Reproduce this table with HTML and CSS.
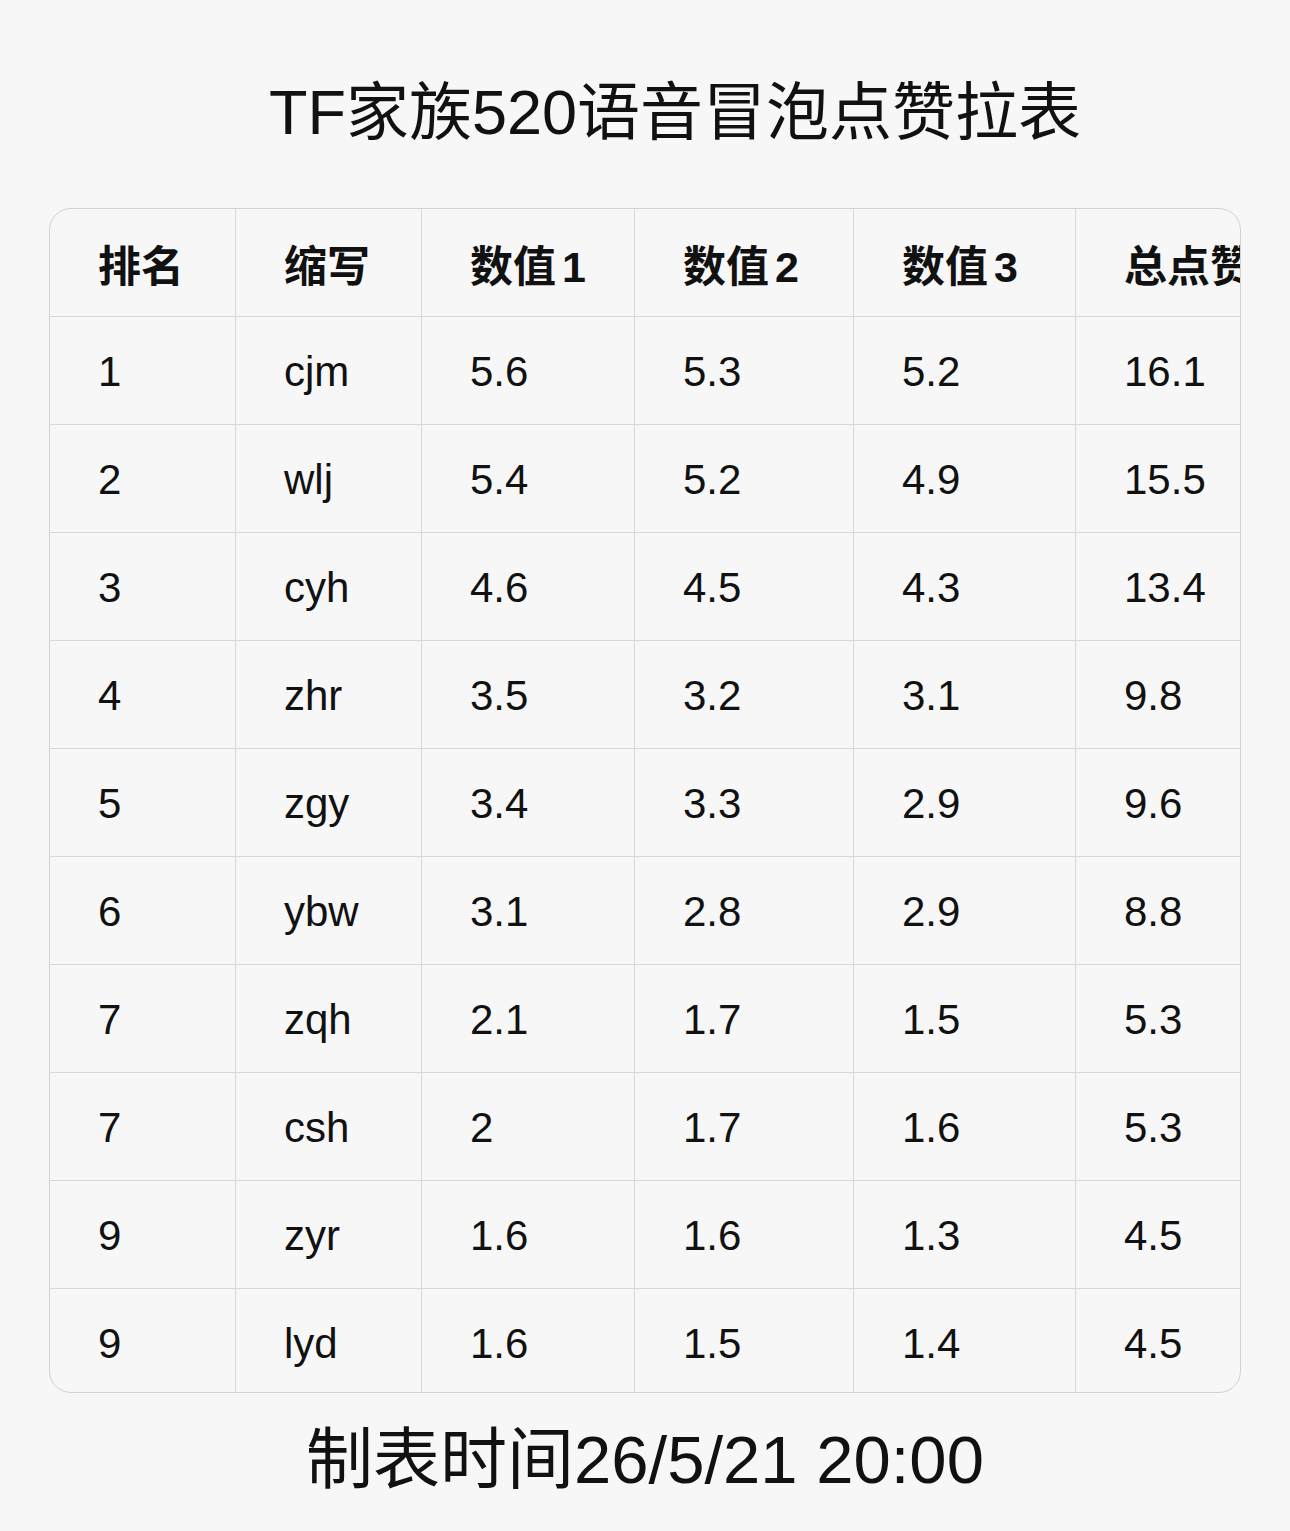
FILE: index.html
```html
<!DOCTYPE html>
<html lang="zh">
<head>
<meta charset="utf-8">
<title>TF家族520语音冒泡点赞拉表</title>
<link rel="stylesheet" href="styles.css">
</head>
<body>
<div class="page">
  <h1 class="title">TF家族520语音冒泡点赞拉表</h1>
  <div class="table-wrap">
    <table class="rank">
      <colgroup>
        <col class="c1"><col class="c2"><col class="c3"><col class="c4"><col class="c5"><col class="c6">
      </colgroup>
      <thead>
        <tr><th>排名</th><th>缩写</th><th>数值<span class="num">1</span></th><th>数值<span class="num">2</span></th><th>数值<span class="num">3</span></th><th>总点赞</th></tr>
      </thead>
      <tbody>
        <tr><td>1</td><td>cjm</td><td>5.6</td><td>5.3</td><td>5.2</td><td>16.1</td></tr>
        <tr><td>2</td><td>wlj</td><td>5.4</td><td>5.2</td><td>4.9</td><td>15.5</td></tr>
        <tr><td>3</td><td>cyh</td><td>4.6</td><td>4.5</td><td>4.3</td><td>13.4</td></tr>
        <tr><td>4</td><td>zhr</td><td>3.5</td><td>3.2</td><td>3.1</td><td>9.8</td></tr>
        <tr><td>5</td><td>zgy</td><td>3.4</td><td>3.3</td><td>2.9</td><td>9.6</td></tr>
        <tr><td>6</td><td>ybw</td><td>3.1</td><td>2.8</td><td>2.9</td><td>8.8</td></tr>
        <tr><td>7</td><td>zqh</td><td>2.1</td><td>1.7</td><td>1.5</td><td>5.3</td></tr>
        <tr><td>7</td><td>csh</td><td>2</td><td>1.7</td><td>1.6</td><td>5.3</td></tr>
        <tr><td>9</td><td>zyr</td><td>1.6</td><td>1.6</td><td>1.3</td><td>4.5</td></tr>
        <tr><td>9</td><td>lyd</td><td>1.6</td><td>1.5</td><td>1.4</td><td>4.5</td></tr>
      </tbody>
    </table>
  </div>
  <p class="footer">制表时间26/5/21 20:00</p>
</div>
</body>
</html>
```

FILE: styles.css
```css
html, body {
  margin: 0;
  padding: 0;
  background: #f7f7f7;
}
body {
  font-family: "Liberation Sans", "Noto Sans CJK SC", sans-serif;
  color: #111;
}
.page {
  width: 1290px;
  height: 1531px;
  overflow: hidden;
  padding-top: 72px;
  box-sizing: border-box;
}
.title {
  margin: 0;
  padding-left: 60px;
  text-align: center;
  font-size: 63px;
  font-weight: 400;
  line-height: 80px;
  height: 80px;
}
.table-wrap {
  margin: 56px 0 0 49px;
  width: 1192px;
  height: 1185px;
  box-sizing: border-box;
  border: 1.5px solid #d2d2d2;
  border-radius: 22px;
  overflow: hidden;
}
.rank {
  border-collapse: collapse;
  table-layout: fixed;
  width: 1275px;
  margin: -1px 0 0 -1px;
}
.c1 { width: 186px; }
.c2 { width: 186px; }
.c3 { width: 213px; }
.c4 { width: 219px; }
.c5 { width: 222px; }
.c6 { width: 249px; }
.rank th, .rank td {
  height: 104px;
  padding: 3px 0 0 48px;
  text-align: left;
  border: 1.5px solid #d8d8d8;
  white-space: nowrap;
  overflow: hidden;
  font-size: 42px;
}
.rank th {
  font-weight: 700;
  font-size: 43px;
  height: 107px;
  padding-top: 0;
}
.rank th .num {
  margin-left: 6px;
}
.rank td {
  font-weight: 400;
}
.footer {
  margin: 29px 0 0 0;
  text-align: center;
  font-size: 67px;
  line-height: 76px;
}
```
